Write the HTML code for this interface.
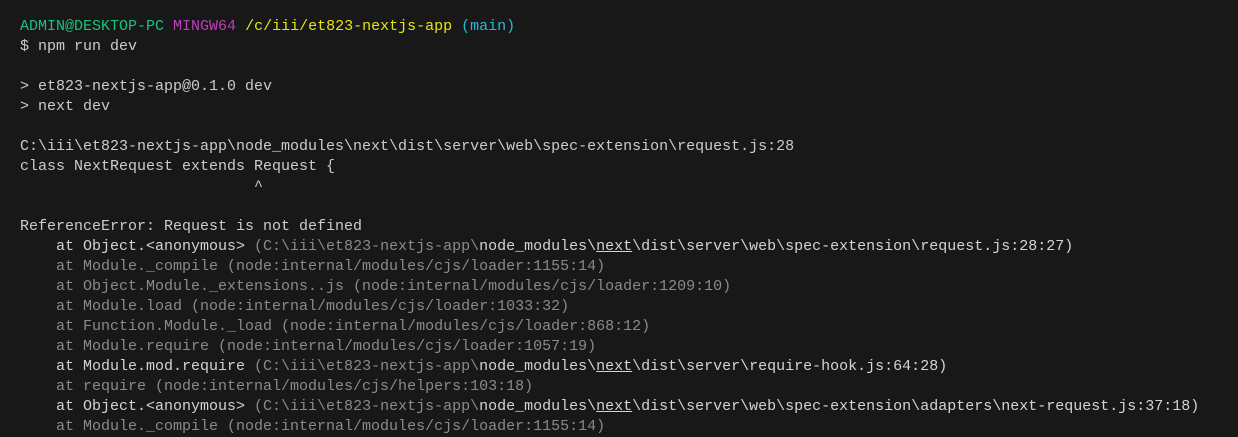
<!DOCTYPE html>
<html><head><meta charset="utf-8"><style>
html,body{margin:0;padding:0;background:#181818;width:1238px;height:436px;overflow:hidden}
pre{margin:0;position:absolute;left:20px;top:17px;font-family:"Liberation Mono",monospace;font-size:15px;line-height:20px;color:#cccccc}
.g{color:#17c27f}.m{color:#bc3fbc}.y{color:#e5e510}.c{color:#29b8db}.d{color:#8a8a8a}.w{color:#d4d4d4}.u{text-decoration:underline;color:#d4d4d4}
</style></head><body><pre><span class="g">ADMIN@DESKTOP-PC</span> <span class="m">MINGW64</span> <span class="y">/c/iii/et823-nextjs-app</span> <span class="c">(main)</span>
$ npm run dev

&gt; et823-nextjs-app@0.1.0 dev
&gt; next dev

C:\iii\et823-nextjs-app\node_modules\next\dist\server\web\spec-extension\request.js:28
class NextRequest extends Request {
                          ^

ReferenceError: Request is not defined
<span class="w">    at Object.&lt;anonymous&gt; </span><span class="d">(C:\iii\et823-nextjs-app\</span><span class="w">node_modules\</span><span class="u">next</span><span class="w">\dist\server\web\spec-extension\request.js:28:27)</span>
<span class="d">    at Module._compile (node:internal/modules/cjs/loader:1155:14)
    at Object.Module._extensions..js (node:internal/modules/cjs/loader:1209:10)
    at Module.load (node:internal/modules/cjs/loader:1033:32)
    at Function.Module._load (node:internal/modules/cjs/loader:868:12)
    at Module.require (node:internal/modules/cjs/loader:1057:19)</span>
<span class="w">    at Module.mod.require </span><span class="d">(C:\iii\et823-nextjs-app\</span><span class="w">node_modules\</span><span class="u">next</span><span class="w">\dist\server\require-hook.js:64:28)</span>
<span class="d">    at require (node:internal/modules/cjs/helpers:103:18)</span>
<span class="w">    at Object.&lt;anonymous&gt; </span><span class="d">(C:\iii\et823-nextjs-app\</span><span class="w">node_modules\</span><span class="u">next</span><span class="w">\dist\server\web\spec-extension\adapters\next-request.js:37:18)</span>
<span class="d">    at Module._compile (node:internal/modules/cjs/loader:1155:14)</span></pre></body></html>
